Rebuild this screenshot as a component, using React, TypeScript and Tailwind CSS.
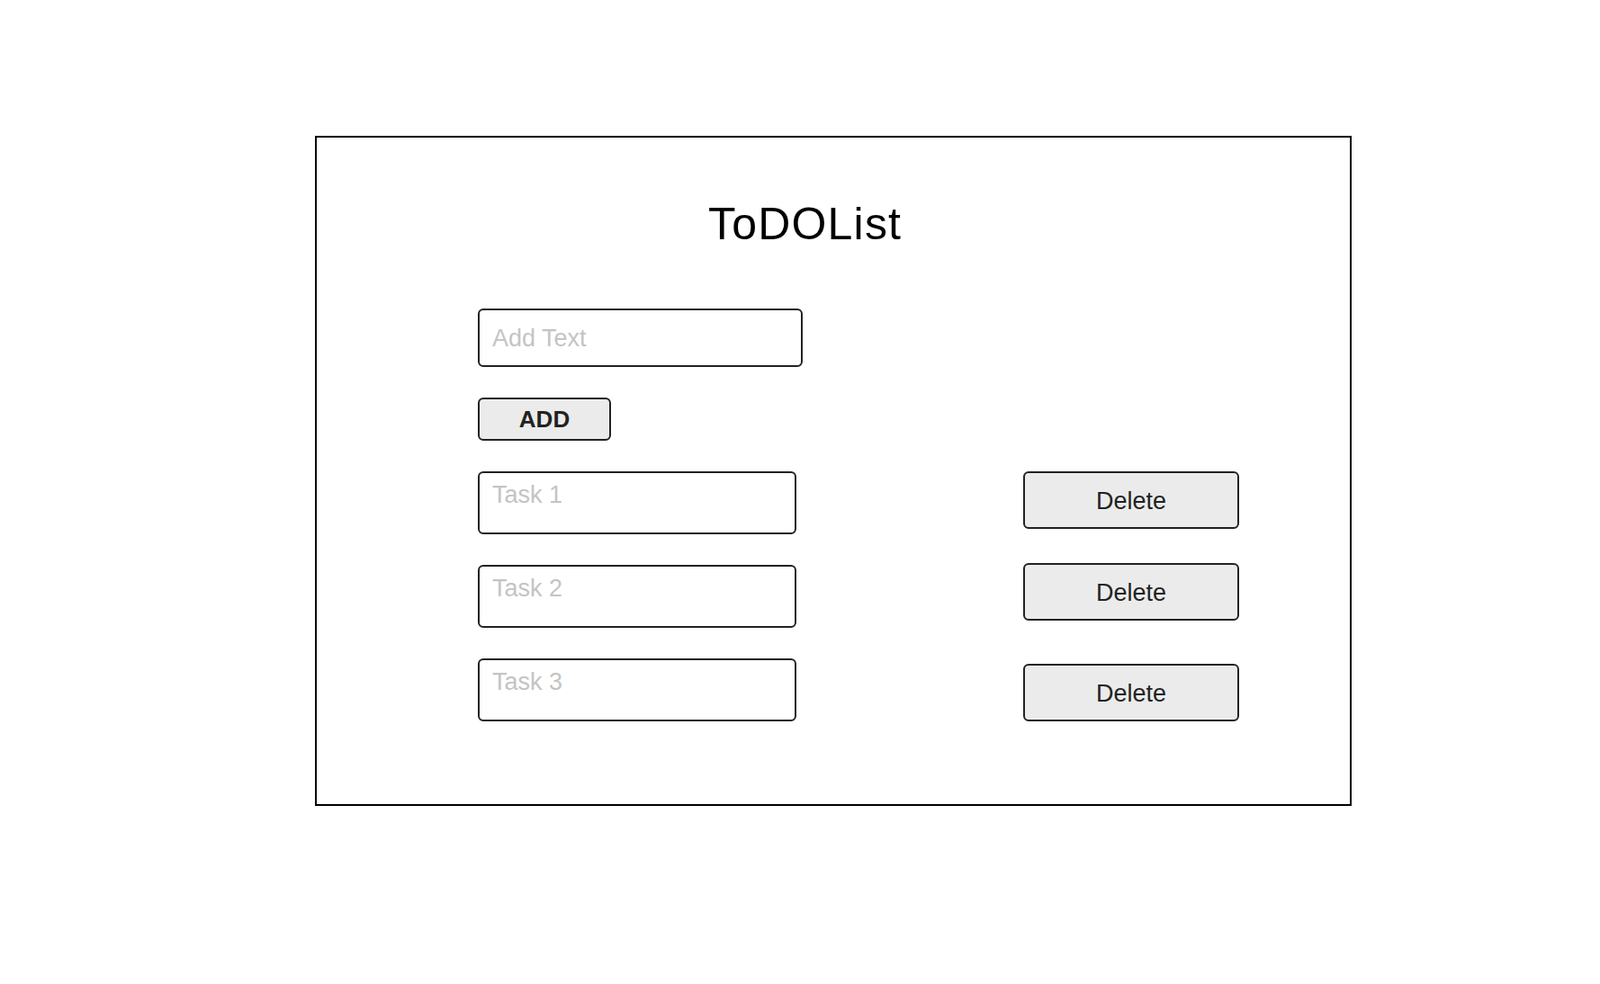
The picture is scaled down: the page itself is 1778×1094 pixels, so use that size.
import React from 'react';

const tasks = [
  { id: 1, text: 'Task 1', btn: 'mt-0' },
  { id: 2, text: 'Task 2', btn: '-mt-[2px]' },
  { id: 3, text: 'Task 3', btn: 'mt-[6px]' },
];

export default function App() {
  return (
    <div className="min-h-screen bg-white pt-[151px] pl-[350px]" style={{ fontFamily: '"Liberation Sans", Arial, sans-serif' }}>
      <div className="w-[1152px] h-[745px] border-2 border-black box-border">
        <h1 className="pt-[69px] pl-[435px] text-[50px] leading-[55px] tracking-[1.2px] text-black font-normal">ToDOList</h1>

        <div className="pl-[179px]">
          <input
            type="text"
            placeholder="Add Text"
            className="mt-[66px] block w-[361px] h-[65px] border-2 border-[#222] rounded-[6px] pl-[14px] pt-[2px] text-[27px] text-[#222] placeholder:text-[#c4c4c4] outline-none"
          />

          <button
            type="button"
            className="mt-[34px] block w-[148px] h-[48px] bg-[#ebebeb] border-2 border-[#222] rounded-[6px] text-[26px] font-bold text-[#222] leading-none"
          >
            ADD
          </button>

          {tasks.map((t) => (
            <div key={t.id} className="mt-[34px] flex items-start h-[70px]">
              <textarea
                placeholder={t.text}
                className="block w-[354px] h-[70px] border-2 border-[#222] rounded-[6px] pl-[14px] pt-[9px] text-[27px] leading-[31px] text-[#222] placeholder:text-[#c4c4c4] resize-none outline-none overflow-hidden"
              />
              <button
                type="button"
                className={`${t.btn} ml-[252px] w-[240px] h-[64px] bg-[#ebebeb] border-2 border-[#222] rounded-[6px] pt-[2px] text-[27px] text-[#222] leading-none`}
              >
                Delete
              </button>
            </div>
          ))}
        </div>
      </div>
    </div>
  );
}
